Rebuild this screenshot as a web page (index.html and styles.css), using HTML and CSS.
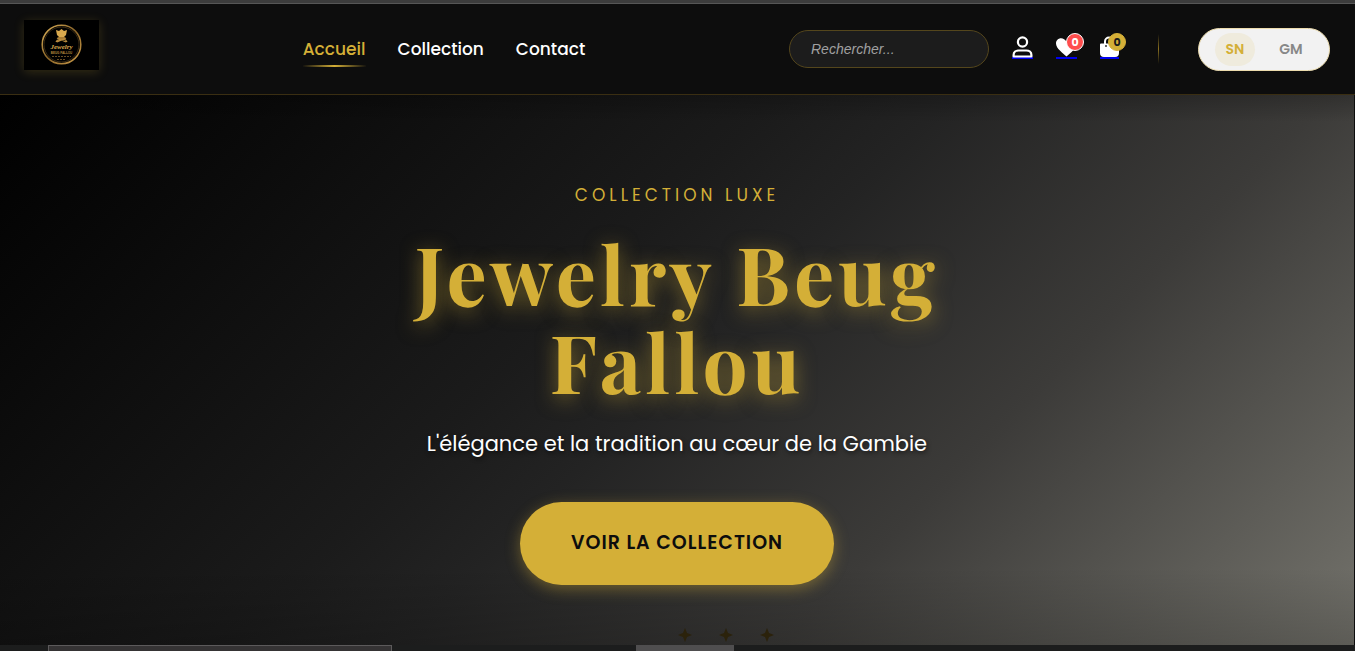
FILE: index.html
```
<!DOCTYPE html>
<html lang="fr">
<head>
    <meta charset="UTF-8">
    <meta name="viewport" content="width=device-width, initial-scale=1.0">
    <title>Jewelry Beug Fallou</title>
    <link rel="stylesheet" href="styles.css">
</head>
<body>
<div class="top-strip"></div>
<header class="header">
    <a href="#" class="logo" aria-label="Jewelry Beug Fallou">
        <svg viewBox="0 0 75 50" width="75" height="50">
            <defs>
                <linearGradient id="gold" x1="0" y1="0" x2="1" y2="1">
                    <stop offset="0" stop-color="#e0b45c"/>
                    <stop offset="0.5" stop-color="#8a6428"/>
                    <stop offset="1" stop-color="#d0a04c"/>
                </linearGradient>
            </defs>
            <rect width="75" height="50" fill="#000"/>
            <circle cx="37.5" cy="24.5" r="19.3" fill="none" stroke="url(#gold)" stroke-width="1.5"/>
            <circle cx="37.5" cy="24.5" r="17.5" fill="none" stroke="#5c4420" stroke-width="0.6"/>
            <path d="M32 10l3 1 2.500-2 2.500 2 3-1-1 5-2 2h-5l-2-2z" fill="#d9a94e"/>
            <path d="M34 17h7l-1 3h-5z" fill="#a97c34"/>
            <path d="M32 22c2-4 4-1 5.500-2s3.500-2 5.500 2M33 18l9 4M42 18l-9 4" fill="none" stroke="#b98b3e" stroke-width="1.2"/>
            <text x="37.5" y="29" class="logo-script">Jewelry</text>
            <text x="37.5" y="33.500" class="logo-small">BEUG FALLOU</text>
            <path d="M28 36.500h19M33 39.500h9" stroke="#80602c" stroke-width="0.8" stroke-dasharray="2 1"/>
        </svg>
    </a>

    <nav class="nav">
        <a href="#" class="active">Accueil</a>
        <a href="#">Collection</a>
        <a href="#">Contact</a>
    </nav>

    <div class="actions">
        <input type="search" class="search" placeholder="Rechercher..." aria-label="Rechercher">
        <div class="icons">
            <a href="#" class="icon" aria-label="Compte">
                <svg viewBox="0 0 21 22" width="21" height="22">
                    <circle cx="10.500" cy="6" r="4.600" fill="none" stroke="#fff" stroke-width="2.200"/>
                    <path d="M1.600 20.500v-1.500c0-2.800 2.300-4.500 5-4.500h7.800c2.700 0 5 1.700 5 4.500v1.500z" fill="none" stroke="#fff" stroke-width="2.200" stroke-linejoin="round"/>
                </svg>
            </a>
            <a href="#" class="icon" aria-label="Favoris">
                <svg viewBox="0 0 21 22" width="21" height="22">
                    <path d="M10.500 20.500C7 17 0 12.500 0 7.500 0 4.500 2.300 2.300 5 2.300c2.300 0 4.200 1.200 5.500 3.500 1.300-2.300 3.200-3.500 5.500-3.500 2.700 0 5 2.200 5 5.200 0 5-7 9.500-10.500 13z" fill="#fff"/>
                </svg>
                <span class="badge badge-red">0</span>
            </a>
            <a href="#" class="icon" aria-label="Panier">
                <svg viewBox="0 0 19 22" width="19" height="22">
                    <path d="M5 8V5.500a4 4 0 0 1 8 0V8" fill="none" stroke="#fff" stroke-width="2"/>
                    <path d="M1 7.500h18v9.500a4 4 0 0 1-4 4H4a4 4 0 0 1-4-4V8.500a1 1 0 0 1 1-1z" fill="#fff"/>
                    <circle cx="6" cy="10" r="1" fill="#333"/>
                </svg>
                <span class="badge badge-gold">0</span>
            </a>
        </div>
        <span class="divider"></span>
        <div class="country">
            <button type="button" class="active">SN</button>
            <button type="button">GM</button>
        </div>
    </div>
</header>

<main class="hero">
    <p class="hero-label">Collection Luxe</p>
    <h1>Jewelry Beug Fallou</h1>
    <p class="hero-text">L'élégance et la tradition au cœur de la Gambie</p>
    <a href="#" class="hero-button">Voir la collection</a>
    <div class="hero-stars">
        <svg viewBox="0 0 14 14" width="14" height="14"><path d="M7 0l2 5 5 2-5 2-2 5-2-5-5-2 5-2z"/></svg>
        <svg viewBox="0 0 14 14" width="14" height="14"><path d="M7 0l2 5 5 2-5 2-2 5-2-5-5-2 5-2z"/></svg>
        <svg viewBox="0 0 14 14" width="14" height="14"><path d="M7 0l2 5 5 2-5 2-2 5-2-5-5-2 5-2z"/></svg>
    </div>
</main>
<footer class="bottom-strip">
    <div class="strip-field"></div>
    <div class="strip-tab"></div>
</footer>
</body>
</html>
```

FILE: styles.css
```
* {
    box-sizing: border-box;
}

body {
    margin: 0;
    min-height: 100vh;
    display: flex;
    flex-direction: column;
    font-family: 'Poppins', 'Inter', sans-serif;
    background: #0d0d0d;
    color: #fff;
}

.top-strip {
    height: 4px;
    background: #3c3c3c;
    border-bottom: 1px solid #565656;
}

.header {
    display: flex;
    justify-content: space-between;
    align-items: center;
    padding: 16px 25px 16px 24px;
    background: #0d0d0d;
    border-bottom: 1px solid #3a2e12;
}

.logo {
    display: block;
    height: 50px;
    margin-bottom: 8px;
    box-shadow: 0 2px 10px rgba(212, 175, 55, 0.2);
}

.logo-script {
    font: italic 700 7px 'Liberation Serif', serif;
    fill: #d9a94e;
    text-anchor: middle;
}

.logo-small {
    font: 700 3px 'Liberation Sans', sans-serif;
    fill: #b98b3e;
    text-anchor: middle;
}

.nav {
    display: flex;
    gap: 32px;
}

.nav a {
    padding: 5px 0 3px;
    border-bottom: 2px solid transparent;
    color: #fff;
    font-size: 17px;
    font-weight: 500;
    line-height: 26px;
    text-decoration: none;
}

.nav a.active {
    color: #d4af37;
    border-image: linear-gradient(90deg, transparent, #d4af37, transparent) 1;
}

.actions {
    display: flex;
    align-items: center;
}

.search {
    width: 200px;
    height: 38px;
    padding: 0 21px;
    border: 1px solid #54461c;
    border-radius: 20px;
    background: #1c1c1c;
    color: #fff;
    font: italic 14px 'Liberation Sans', sans-serif;
}

.search::placeholder {
    color: #a0a0a0;
}

.icons {
    display: flex;
    gap: 23px;
    margin-left: 23px;
    padding-bottom: 4px;
}

.icon {
    position: relative;
    height: 23px;
    border-bottom: 2px solid #0000ee;
}

.icon svg {
    display: block;
}

.badge {
    position: absolute;
    top: -3px;
    right: -7px;
    width: 18px;
    height: 18px;
    border-radius: 50%;
    font-size: 11px;
    font-weight: 700;
    line-height: 16px;
    text-align: center;
}

.badge-red {
    background: #ff4d4d;
    border: 1px solid #fff;
    color: #fff;
}

.badge-gold {
    background: #d4af37;
    border: 1px solid #d4af37;
    color: #1a1a1a;
}

.divider {
    width: 1px;
    height: 30px;
    margin: 0 39px;
    background: linear-gradient(transparent, #8a7020, transparent);
}

.country {
    display: flex;
    gap: 16px;
    padding: 4px 18px 4px 16px;
    border: 1px solid #ecdcae;
    border-radius: 24px;
    background: #f2f2f2;
}

.country button {
    width: 40px;
    height: 33px;
    padding: 0;
    border: 0;
    border-radius: 20px;
    background: none;
    color: #888;
    font-family: inherit;
    font-size: 14px;
    font-weight: 600;
    cursor: pointer;
}

.country .active {
    background: #efebdd;
    color: #d4af37;
}

.hero {
    flex: 1;
    display: flex;
    flex-direction: column;
    align-items: center;
    padding-top: 84px;
    margin-right: 1px;
    text-align: center;
    background:
        linear-gradient(rgba(0, 0, 0, 0.2), transparent 5%, transparent 86%, rgba(0, 0, 0, 0.2)),
        linear-gradient(135deg, #000 0%, #111 26%, #1b1b1b 41%, #232323 50%, #3c3b39 70%, #74736c 100%);
}

.hero-label {
    margin: 0 0 18px;
    color: #d4af37;
    font-size: 17px;
    font-weight: 400;
    line-height: 32px;
    letter-spacing: 4px;
    text-transform: uppercase;
}

.hero h1 {
    max-width: 640px;
    margin: 0 0 20px;
    color: #d4af37;
    font-family: 'Playfair Display', 'Liberation Serif', serif;
    font-size: 80px;
    font-weight: 700;
    line-height: 88px;
    letter-spacing: 4px;
    text-shadow: 0 4px 20px rgba(212, 175, 55, 0.5);
}

.hero-text {
    margin: 0 0 39px;
    font-size: 21px;
    font-weight: 400;
    line-height: 38px;
    text-shadow: 1px 2px 4px rgba(0, 0, 0, 0.6);
}

.hero-button {
    padding: 25px 51px 26px;
    border-radius: 42px;
    background: #d4af37;
    color: #0d0d0d;
    font-size: 19px;
    font-weight: 600;
    line-height: 32px;
    letter-spacing: 1px;
    text-decoration: none;
    text-transform: uppercase;
    box-shadow: 0 4px 15px rgba(212, 175, 55, 0.4);
}

.hero-stars {
    display: flex;
    gap: 27px;
    margin-top: 43px;
    margin-left: 97px;
}

.hero-stars svg {
    display: block;
    fill: #2b220b;
}

.bottom-strip {
    display: flex;
    height: 6px;
    padding-left: 48px;
    background: #1c1d1d;
}

.strip-field {
    width: 344px;
    background: #353334;
    border: 1px solid #5c5a5b;
    border-bottom: 0;
}

.strip-tab {
    width: 98px;
    margin-left: 244px;
    background: #4f4e4f;
}
```
